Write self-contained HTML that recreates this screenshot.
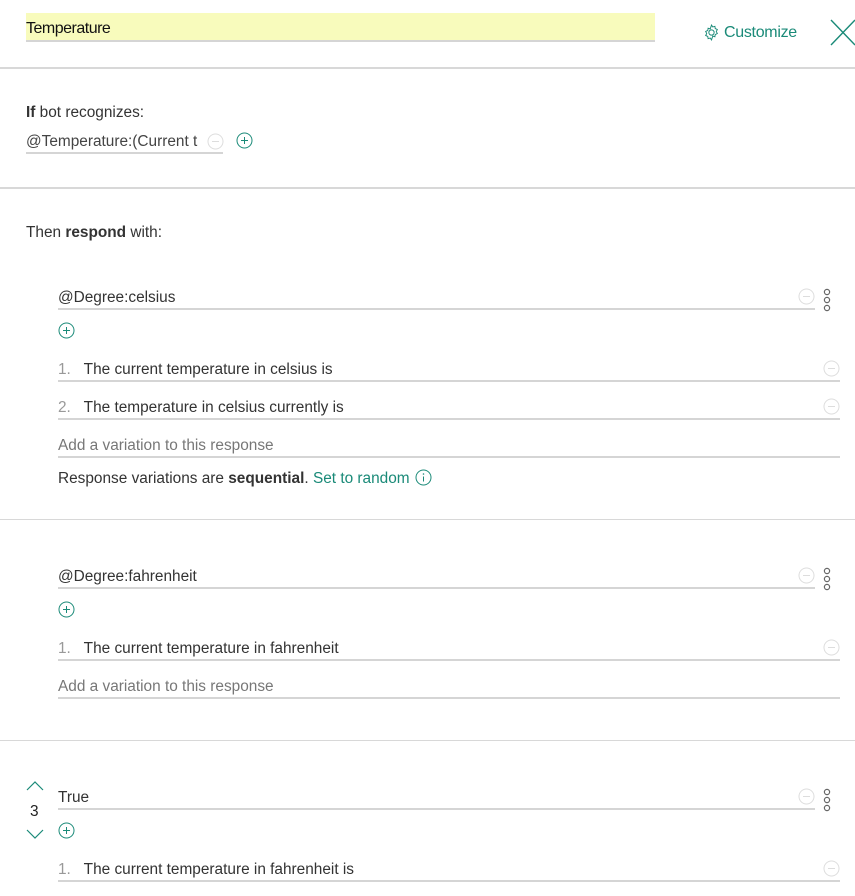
<!DOCTYPE html>
<html><head><meta charset="utf-8"><style>
*{margin:0;padding:0;box-sizing:border-box}
body{width:855px;height:896px;overflow:hidden;background:#fff;font-family:"Liberation Sans",Arial,sans-serif;font-size:15.4px;color:#333;position:relative}
.t{position:absolute;line-height:20px;white-space:nowrap;margin-top:2px}
.u{position:absolute;height:2px;background:#d5d5d5}
.hr{position:absolute;left:0;width:855px;height:1px;background:#d8d8d8}
.ic{position:absolute}
.g{color:#999}
.teal{color:#1a8a78}
</style></head><body>
<div style="position:absolute;left:26px;top:13px;width:629px;height:28px;background:#f8fbbc"></div>
<div class="u" style="left:26px;top:40px;width:629px"></div>
<div class="t" style="left:26px;top:17px;color:#111;font-size:16px;letter-spacing:-0.5px">Temperature</div>
<svg class="ic" style="left:703px;top:24px" width="17" height="17" viewBox="0 0 16 16" fill="none" stroke="#1a8a78" stroke-width="0.9"><circle cx="8" cy="8" r="2.5"/><path d="M8 1l1.2 1.8 2-.6.3 2.1 2 .9-1 1.9 1 1.9-2 .9-.3 2.1-2-.6L8 15l-1.2-1.8-2 .6-.3-2.1-2-.9 1-1.9-1-1.9 2-.9.3-2.1 2 .6z"/></svg>
<div class="t teal" style="left:724px;top:21px;font-size:16px;letter-spacing:-0.3px">Customize</div>
<svg class="ic" style="left:830px;top:19px" width="26" height="27" viewBox="0 0 26 27" stroke="#1a8a78" stroke-width="1.4"><path d="M1 1L25 26M25 1L1 26"/></svg>
<div class="hr" style="top:67px;height:2px"></div>

<div class="t" style="left:26px;top:101px"><b>If</b> bot recognizes:</div>
<div class="t" style="left:26px;top:130px;color:#444">@Temperature:(Current t</div>
<div class="u" style="left:26px;top:152px;width:197px"></div>
<svg class="ic" style="left:207px;top:133px" width="17" height="17"><circle cx="8.5" cy="8.5" r="7.5" fill="none" stroke="#ddd"/><path d="M5 8.5h7" stroke="#ddd"/></svg>
<svg class="ic" style="left:236px;top:132px" width="17" height="17"><circle cx="8.5" cy="8.5" r="7.5" fill="none" stroke="#1a8a78"/><path d="M5 8.5h7M8.5 5v7" stroke="#1a8a78"/></svg>
<div class="hr" style="top:187px;height:2px"></div>

<div class="t" style="left:26px;top:221px">Then <b>respond</b> with:</div>

<div class="t" style="left:58px;top:286px">@Degree:celsius</div>
<div class="u" style="left:58px;top:308px;width:757px"></div>
<svg class="ic" style="left:798px;top:288px" width="17" height="17"><circle cx="8.5" cy="8.5" r="7.5" fill="none" stroke="#ddd"/><path d="M5 8.5h7" stroke="#ddd"/></svg>
<svg class="ic" style="left:822px;top:288px" width="10" height="26" fill="none" stroke="#666" stroke-width="1.2"><circle cx="5" cy="4" r="2.6"/><circle cx="5" cy="12" r="2.6"/><circle cx="5" cy="20" r="2.6"/></svg>
<svg class="ic" style="left:58px;top:322px" width="17" height="17"><circle cx="8.5" cy="8.5" r="7.5" fill="none" stroke="#1a8a78"/><path d="M5 8.5h7M8.5 5v7" stroke="#1a8a78"/></svg>
<div class="t" style="left:58px;top:358px"><span class="g">1.</span>&nbsp;&nbsp;&nbsp;The current temperature in celsius is</div>
<div class="u" style="left:58px;top:380px;width:782px"></div>
<svg class="ic" style="left:823px;top:360px" width="17" height="17"><circle cx="8.5" cy="8.5" r="7.5" fill="none" stroke="#ddd"/><path d="M5 8.5h7" stroke="#ddd"/></svg>
<div class="t" style="left:58px;top:396px"><span class="g">2.</span>&nbsp;&nbsp;&nbsp;The temperature in celsius currently is</div>
<div class="u" style="left:58px;top:418px;width:782px"></div>
<svg class="ic" style="left:823px;top:398px" width="17" height="17"><circle cx="8.5" cy="8.5" r="7.5" fill="none" stroke="#ddd"/><path d="M5 8.5h7" stroke="#ddd"/></svg>
<div class="t" style="left:58px;top:434px;color:#777">Add a variation to this response</div>
<div class="u" style="left:58px;top:456px;width:782px"></div>
<div class="t" style="left:58px;top:467px">Response variations are <b>sequential</b>. <span class="teal">Set to random</span></div>
<svg class="ic" style="left:415px;top:469px" width="17" height="17"><circle cx="8.5" cy="8.5" r="7.5" fill="none" stroke="#1a8a78"/><path d="M8.5 7.5v5" stroke="#1a8a78"/><circle cx="8.5" cy="5" r=".8" fill="#1a8a78"/></svg>
<div class="hr" style="top:519px"></div>

<div class="t" style="left:58px;top:565px">@Degree:fahrenheit</div>
<div class="u" style="left:58px;top:587px;width:757px"></div>
<svg class="ic" style="left:798px;top:567px" width="17" height="17"><circle cx="8.5" cy="8.5" r="7.5" fill="none" stroke="#ddd"/><path d="M5 8.5h7" stroke="#ddd"/></svg>
<svg class="ic" style="left:822px;top:567px" width="10" height="26" fill="none" stroke="#666" stroke-width="1.2"><circle cx="5" cy="4" r="2.6"/><circle cx="5" cy="12" r="2.6"/><circle cx="5" cy="20" r="2.6"/></svg>
<svg class="ic" style="left:58px;top:601px" width="17" height="17"><circle cx="8.5" cy="8.5" r="7.5" fill="none" stroke="#1a8a78"/><path d="M5 8.5h7M8.5 5v7" stroke="#1a8a78"/></svg>
<div class="t" style="left:58px;top:637px"><span class="g">1.</span>&nbsp;&nbsp;&nbsp;The current temperature in fahrenheit</div>
<div class="u" style="left:58px;top:659px;width:782px"></div>
<svg class="ic" style="left:823px;top:639px" width="17" height="17"><circle cx="8.5" cy="8.5" r="7.5" fill="none" stroke="#ddd"/><path d="M5 8.5h7" stroke="#ddd"/></svg>
<div class="t" style="left:58px;top:675px;color:#777">Add a variation to this response</div>
<div class="u" style="left:58px;top:697px;width:782px"></div>
<div class="hr" style="top:740px"></div>

<svg class="ic" style="left:26px;top:781px" width="18" height="10" fill="none" stroke="#1a8a78" stroke-width="1.2"><path d="M1 9L9 1l8 8"/></svg>
<div class="t" style="left:30px;top:800px;color:#222">3</div>
<svg class="ic" style="left:26px;top:829px" width="18" height="10" fill="none" stroke="#1a8a78" stroke-width="1.2"><path d="M1 1l8 8 8-8"/></svg>
<div class="t" style="left:58px;top:786px">True</div>
<div class="u" style="left:58px;top:808px;width:757px"></div>
<svg class="ic" style="left:798px;top:788px" width="17" height="17"><circle cx="8.5" cy="8.5" r="7.5" fill="none" stroke="#ddd"/><path d="M5 8.5h7" stroke="#ddd"/></svg>
<svg class="ic" style="left:822px;top:788px" width="10" height="26" fill="none" stroke="#666" stroke-width="1.2"><circle cx="5" cy="4" r="2.6"/><circle cx="5" cy="12" r="2.6"/><circle cx="5" cy="20" r="2.6"/></svg>
<svg class="ic" style="left:58px;top:822px" width="17" height="17"><circle cx="8.5" cy="8.5" r="7.5" fill="none" stroke="#1a8a78"/><path d="M5 8.5h7M8.5 5v7" stroke="#1a8a78"/></svg>
<div class="t" style="left:58px;top:858px"><span class="g">1.</span>&nbsp;&nbsp;&nbsp;The current temperature in fahrenheit is</div>
<div class="u" style="left:58px;top:880px;width:782px"></div>
<svg class="ic" style="left:823px;top:860px" width="17" height="17"><circle cx="8.5" cy="8.5" r="7.5" fill="none" stroke="#ddd"/><path d="M5 8.5h7" stroke="#ddd"/></svg>
</body></html>
